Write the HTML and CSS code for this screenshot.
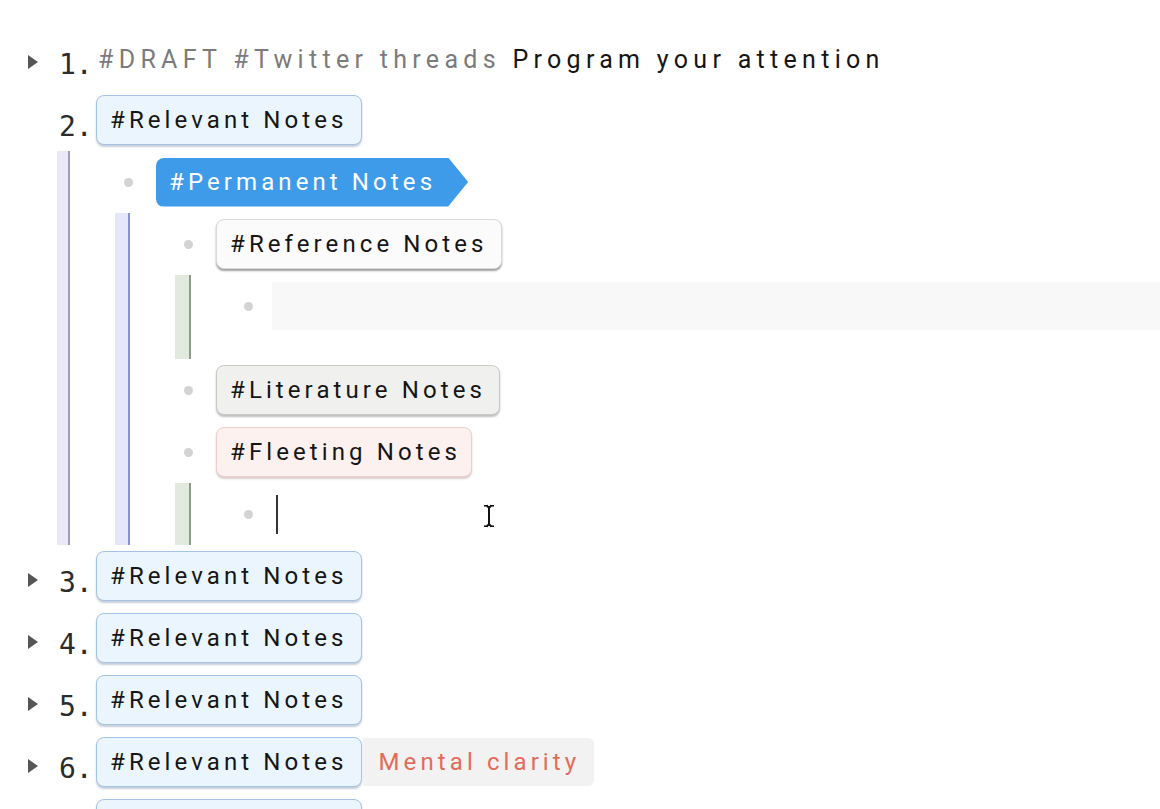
FILE: index.html
```html
<!DOCTYPE html>
<html>
<head>
<meta charset="utf-8">
<link rel="stylesheet" href="styles.css">
</head>
<body>
<div class="outline">
  <div class="block">
    <div class="row">
      <div class="gutter-top"><span class="caret"></span><span class="num">1.</span></div>
      <div class="plain"><span class="muted">#DRAFT #Twitter threads</span> Program your attention</div>
    </div>
  </div>

  <div class="block">
    <div class="row">
      <div class="gutter-top"><span class="caret hidden"></span><span class="num">2.</span></div>
      <span class="pill pill-blue">#Relevant Notes</span>
    </div>
    <div class="children children-top">
      <div class="thread thread-1"></div>
      <div class="list">
        <div class="block">
          <div class="row">
            <div class="gutter"><span class="bullet"></span></div>
            <span class="pill pill-perm">#Permanent Notes</span>
          </div>
          <div class="children">
            <div class="thread thread-2"></div>
            <div class="list">
              <div class="block">
                <div class="row">
                  <div class="gutter"><span class="bullet"></span></div>
                  <span class="pill pill-ref">#Reference Notes</span>
                </div>
                <div class="children">
                  <div class="thread thread-3"></div>
                  <div class="list list-gap">
                    <div class="block">
                      <div class="row">
                        <div class="gutter"><span class="bullet"></span></div>
                        <div class="ghost"></div>
                      </div>
                    </div>
                  </div>
                </div>
              </div>
              <div class="block">
                <div class="row">
                  <div class="gutter"><span class="bullet"></span></div>
                  <span class="pill pill-lit">#Literature Notes</span>
                </div>
              </div>
              <div class="block">
                <div class="row">
                  <div class="gutter"><span class="bullet"></span></div>
                  <span class="pill pill-fleet">#Fleeting Notes</span>
                </div>
                <div class="children">
                  <div class="thread thread-3"></div>
                  <div class="list">
                    <div class="block">
                      <div class="row">
                        <div class="gutter"><span class="bullet"></span></div>
                        <span class="text-cursor"></span>
                      </div>
                    </div>
                  </div>
                </div>
              </div>
            </div>
          </div>
        </div>
      </div>
    </div>
  </div>

  <div class="block">
    <div class="row">
      <div class="gutter-top"><span class="caret"></span><span class="num">3.</span></div>
      <span class="pill pill-blue">#Relevant Notes</span>
    </div>
  </div>
  <div class="block">
    <div class="row">
      <div class="gutter-top"><span class="caret"></span><span class="num">4.</span></div>
      <span class="pill pill-blue">#Relevant Notes</span>
    </div>
  </div>
  <div class="block">
    <div class="row">
      <div class="gutter-top"><span class="caret"></span><span class="num">5.</span></div>
      <span class="pill pill-blue">#Relevant Notes</span>
    </div>
  </div>
  <div class="block">
    <div class="row">
      <div class="gutter-top"><span class="caret"></span><span class="num">6.</span></div>
      <span class="pill pill-blue">#Relevant Notes</span>
      <span class="note-red">Mental clarity</span>
    </div>
  </div>
  <div class="block">
    <div class="row">
      <div class="gutter-top"><span class="caret"></span><span class="num">7.</span></div>
      <span class="pill pill-blue">#Relevant Notes</span>
    </div>
  </div>
</div>

<svg class="ibeam" width="14" height="26" viewBox="0 0 14 26">
  <path d="M1.5 1.5h4l1.5 1.3 1.5-1.3h4v2.6h-2.8l-1.2 1v15.8l1.2 1h2.8v2.6h-4l-1.5-1.3-1.5 1.3h-4v-2.6h2.8l1.2-1v-15.8l-1.2-1h-2.8z" fill="#111" stroke="#fff" stroke-width="1"/>
</svg>
</body>
</html>
```

FILE: styles.css
```css
* { box-sizing: border-box; }
html, body { margin: 0; padding: 0; background: #fff; }
body {
  font-family: "Roboto", "Liberation Sans", sans-serif;
  color: #151515;
  width: 1160px;
  height: 809px;
  overflow: hidden;
  position: relative;
}
.outline { padding-top: 27px; }
.row {
  display: flex;
  align-items: center;
  height: 62px;
}
.gutter-top {
  width: 96px;
  flex-shrink: 0;
  display: flex;
  align-items: center;
}
.caret {
  width: 0; height: 0;
  border-left: 10px solid #555;
  border-top: 7px solid transparent;
  border-bottom: 7px solid transparent;
  margin-left: 28px;
  margin-right: 22px;
  margin-top: 7px;
}
.caret.hidden { visibility: hidden; }
.num {
  font-family: "DejaVu Sans Mono", monospace;
  font-size: 28px;
  color: #2b2b2b;
  margin-top: 14px;
  margin-left: -1px;
  line-height: 1;
}
.plain {
  font-size: 25px;
  letter-spacing: 5.3px;
  color: #151515;
  margin-top: 2px;
  margin-left: 2px;
  white-space: nowrap;
}
.muted { color: #7b7b7b; }
.gutter {
  width: 60px;
  flex-shrink: 0;
  display: flex;
  align-items: center;
}
.bullet {
  width: 9px; height: 9px;
  border-radius: 50%;
  background: #d3d3d3;
  margin-left: 28px;
}
.children { display: flex; margin-left: 19px; }
.children-top { margin-left: 57px; }
.thread {
  width: 14px;
  flex-shrink: 0;
  margin-right: 27px;
}
.children-top .thread-1 { width: 13px; margin-right: 26px; }
.thread-1 { background: #eae8f4; border-right: 2px solid #9c99c2; }
.thread-2 { background: #e5e7f8; border-right: 2px solid #8792cf; width: 15px; margin-right: 26px; }
.thread-3 { background: #e2e9df; border-right: 2px solid #8d9d89; width: 16px; margin-right: 25px; }
.list { flex: 1; }
.list-gap { padding-bottom: 22px; }
.pill {
  display: inline-flex;
  align-items: center;
  height: 50px;
  padding: 0 13px 0 13px;
  border-radius: 8px;
  font-size: 24px;
  letter-spacing: 4.1px;
  color: #151515;
  white-space: nowrap;
}
.pill-blue {
  background: #ebf5fd;
  border: 1.5px solid #a3c4e5;
  box-shadow: 0 2px 2px rgba(50, 80, 120, 0.28);
}
.pill-perm {
  height: 49px;
  background: #3e9be9;
  color: #fff;
  padding-right: 32px;
  clip-path: polygon(0 0, calc(100% - 20px) 0, 100% 50%, calc(100% - 20px) 100%, 0 100%);
}
.pill-ref {
  background: #fbfbfb;
  border: 1px solid #d9d9d9;
  box-shadow: 0 2px 2px rgba(0, 0, 0, 0.38);
}
.pill-lit {
  background: #f0f1ee;
  border: 1px solid #c8cac5;
  box-shadow: 0 2px 2px rgba(0, 0, 0, 0.25);
}
.pill-fleet {
  background: #fdf1f0;
  border: 1px solid #ebcfcb;
  box-shadow: 0 2px 2px rgba(120, 60, 60, 0.25);
  padding-right: 10px;
}
.ghost {
  flex: 1;
  height: 48px;
  margin-left: -4px;
  background: #f8f8f8;
}
.text-cursor {
  width: 2px;
  height: 39px;
  background: #333;
}
.note-red {
  display: inline-flex;
  align-items: center;
  height: 48px;
  padding: 0 14px 0 16px;
  margin-left: 1px;
  background: #f2f2f2;
  border-radius: 0 6px 6px 0;
  font-size: 24px;
  letter-spacing: 4.1px;
  color: #e26c5b;
  white-space: nowrap;
}
.ibeam {
  position: absolute;
  left: 482px;
  top: 503px;
}
```
